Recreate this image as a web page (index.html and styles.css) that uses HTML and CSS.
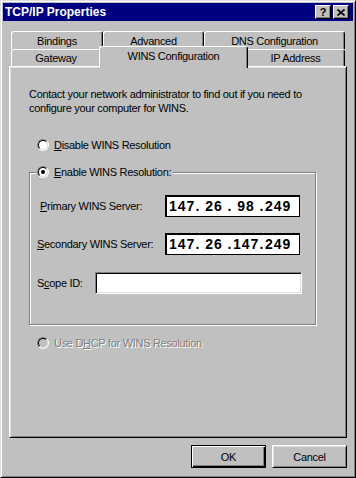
FILE: index.html
```html
<!DOCTYPE html>
<html>
<head>
<meta charset="utf-8">
<title>TCP/IP Properties</title>
<link rel="stylesheet" href="styles.css">
</head>
<body>
<div class="window">
  <div class="titlebar">
    <span class="title">TCP/IP Properties</span>
    <div class="tb-buttons">
      <span class="tb-btn help">?</span>
      <span class="tb-btn close"><svg width="8" height="7" viewBox="0 0 8 7"><path d="M0.5 0.5 L7.5 6.5 M7.5 0.5 L0.5 6.5" stroke="#000" stroke-width="1.7" fill="none"/></svg></span>
    </div>
  </div>
  <div class="body">
    <div class="tabs">
      <div class="tab-row back">
        <div class="tab t-bind">Bindings</div>
        <div class="tab t-adv">Advanced</div>
        <div class="tab t-dns">DNS Configuration</div>
      </div>
      <div class="tab-row front">
        <div class="tab t-gw">Gateway</div>
        <div class="tab t-wins selected">WINS Configuration</div>
        <div class="tab t-ip">IP Address</div>
      </div>
    </div>
    <div class="panel">
      <p class="intro">Contact your network administrator to find out if you need to<br>configure your computer for WINS.</p>
      <div class="radio-row opt-disable">
        <span class="radio"><span class="radio-in"></span></span>
        <span><u>D</u>isable WINS Resolution</span>
      </div>
      <div class="group">
        <div class="radio-row legend">
          <span class="radio"><span class="radio-in"><span class="dot"></span></span></span>
          <span><u>E</u>nable WINS Resolution:</span>
        </div>
        <div class="field-row row-primary">
          <span class="lbl-ip primary"><u>P</u>rimary WINS Server:</span>
          <div class="ip"><span class="oct">147</span><span class="sep">.</span><span class="oct">26</span><span class="sep">.</span><span class="oct">98</span><span class="sep">.</span><span class="oct">249</span></div>
        </div>
        <div class="field-row row-secondary">
          <span class="lbl-ip"><u>S</u>econdary WINS Server:</span>
          <div class="ip"><span class="oct">147</span><span class="sep">.</span><span class="oct">26</span><span class="sep">.</span><span class="oct">147</span><span class="sep">.</span><span class="oct">249</span></div>
        </div>
        <div class="field-row row-scope">
          <span class="lbl-scope">S<u>c</u>ope ID:</span>
          <div class="textbox"></div>
        </div>
      </div>
      <div class="radio-row opt-dhcp disabled">
        <span class="radio dis"><span class="radio-in"></span></span>
        <span>Use D<u>H</u>CP for WINS Resolution</span>
      </div>
    </div>
    <div class="buttons">
      <div class="btn default">OK</div>
      <div class="btn">Cancel</div>
    </div>
  </div>
</div>
</body>
</html>
```
FILE: styles.css
```css
* { box-sizing: border-box; }
html, body { margin: 0; padding: 0; }
body {
  font-family: "Liberation Sans", Arial, sans-serif;
  font-size: 11px;
  letter-spacing: -0.3px;
  color: #000;
  background: #c0c0c0;
}
.window {
  width: 356px;
  height: 478px;
  background: #c0c0c0;
  border: 1px solid;
  border-color: #dfdfdf #000 #000 #dfdfdf;
  box-shadow: inset 1px 1px 0 #fff, inset -1px -1px 0 #808080;
  padding: 2px;
}
.titlebar {
  height: 18px;
  background: #000080;
  color: #fff;
  display: flex;
  align-items: center;
  justify-content: space-between;
  padding: 0 4px 0 2px;
}
.title { font-weight: bold; font-size: 12px; letter-spacing: 0; }
.tb-buttons { display: flex; gap: 2px; }
.tb-btn {
  width: 16px;
  height: 14px;
  background: #c0c0c0;
  border: 1px solid;
  border-color: #fff #000 #000 #fff;
  box-shadow: inset -1px -1px 0 #808080;
  display: flex;
  align-items: center;
  justify-content: center;
  color: #000;
  font-weight: bold;
  font-size: 11px;
  letter-spacing: 0;
  line-height: 1;
}
.body { padding: 10px 6px 0; }
.tabs { padding: 0 2px; }
.tab-row { display: flex; }
.tab {
  background: #c0c0c0;
  border-top: 1px solid #fff;
  border-left: 1px solid #fff;
  border-right: 1px solid #000;
  box-shadow: inset -1px 0 0 #808080;
  border-radius: 3px 3px 0 0;
  display: flex;
  align-items: center;
  justify-content: center;
}
.back .tab { height: 18px; }
.front .tab { height: 17px; }
.t-bind { width: 92px; }
.t-adv { width: 101px; }
.t-dns { width: 141px; }
.t-gw { width: 90px; }
.t-wins { width: 145px; }
.t-ip { width: 99px; }
.tab.selected {
  width: 149px;
  height: 22px;
  margin: -3px -2px -2px;
  padding-bottom: 3px;
  position: relative;
  z-index: 2;
}
.panel {
  height: 372px;
  border: 1px solid;
  border-color: #fff #000 #000 #fff;
  box-shadow: inset 1px 1px 0 #dfdfdf, inset -1px -1px 0 #808080;
  padding: 20px 0 0 19px;
}
.intro { margin: 0; line-height: 14px; }
.radio-row { display: flex; align-items: center; height: 14px; gap: 5px; }
.opt-disable { margin-top: 23px; padding-left: 8px; }
.radio {
  width: 12px;
  height: 12px;
  flex: none;
  border-radius: 50%;
  border: 1px solid;
  border-color: #808080 #fff #fff #808080;
  display: flex;
  align-items: center;
  justify-content: center;
}
.radio-in {
  width: 10px;
  height: 10px;
  border-radius: 50%;
  border: 1px solid;
  border-color: #000 #dfdfdf #dfdfdf #000;
  background: #fff;
  display: flex;
  align-items: center;
  justify-content: center;
}
.dot { width: 4px; height: 4px; border-radius: 50%; background: #000; }
.radio.dis .radio-in { background: #c0c0c0; }
.group {
  margin-top: 20px;
  width: 287px;
  height: 153px;
  border: 1px solid #808080;
  box-shadow: inset 1px 1px 0 #fff, 1px 1px 0 #fff;
  padding-left: 7px;
}
.legend {
  width: fit-content;
  margin: -8px 0 0 -1px;
  padding: 0 2px 0 1px;
  background: #c0c0c0;
}
.field-row { display: flex; align-items: center; }
.row-primary { margin-top: 16px; }
.row-secondary { margin-top: 16px; }
.row-scope { margin-top: 17px; }
.lbl-ip { width: 128px; }
.lbl-ip.primary { padding-left: 3px; }
.lbl-scope { width: 58px; }
.ip {
  width: 135px;
  height: 22px;
  background: #fff;
  border: 1px solid #000;
  box-shadow: inset 1px 1px 0 #000;
  display: flex;
  align-items: center;
  padding-left: 2px;
  font-size: 14px;
  font-weight: bold;
  letter-spacing: 1px;
}
.oct { width: 27px; text-align: center; padding-left: 1px; }
.sep { width: 5px; text-align: center; letter-spacing: 0; }
.textbox {
  width: 207px;
  height: 22px;
  background: #fff;
  border: 1px solid;
  border-color: #808080 #fff #fff #808080;
  box-shadow: inset 1px 1px 0 #000, inset -1px -1px 0 #dfdfdf;
}
.opt-dhcp { margin-top: 11px; padding-left: 8px; }
.disabled { color: #808080; text-shadow: 1px 1px 0 #fff; }
.buttons {
  display: flex;
  justify-content: flex-end;
  gap: 6px;
  margin-top: 7px;
}
.btn {
  width: 75px;
  height: 23px;
  display: flex;
  align-items: center;
  justify-content: center;
  border: 1px solid;
  border-color: #fff #000 #000 #fff;
  box-shadow: inset 1px 1px 0 #dfdfdf, inset -1px -1px 0 #808080;
}
.btn.default {
  border-color: #000;
  box-shadow: inset 1px 1px 0 #fff, inset -1px -1px 0 #000, inset -2px -2px 0 #808080;
}
```
